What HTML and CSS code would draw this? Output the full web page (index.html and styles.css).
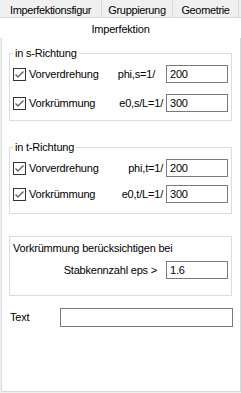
FILE: index.html
```html
<!DOCTYPE html>
<html>
<head>
<meta charset="utf-8">
<link rel="stylesheet" href="styles.css">
</head>
<body>
<div class="tabrow back">
  <div class="tab t1">Imperfektionsfigur</div>
  <div class="tab t2">Gruppierung</div>
  <div class="tab t3">Geometrie</div>
</div>
<div class="tabrow front">
  <div class="tab active">Imperfektion</div>
</div>
<div class="panel">
  <fieldset class="group g1">
    <legend>in s-Richtung</legend>
    <div class="row">
      <label class="check"><svg class="box" width="13" height="13" viewBox="0 0 13 13"><rect x="0.5" y="0.5" width="12" height="12" fill="#fff" stroke="#333"/><polyline points="2.5,6.5 5,9 10.5,3.5" fill="none" stroke="#555" stroke-width="1.2"/></svg>Vorverdrehung</label>
      <span class="param wide">phi,s=1/</span>
      <input class="field" value="200">
    </div>
    <div class="row">
      <label class="check"><svg class="box" width="13" height="13" viewBox="0 0 13 13"><rect x="0.5" y="0.5" width="12" height="12" fill="#fff" stroke="#333"/><polyline points="2.5,6.5 5,9 10.5,3.5" fill="none" stroke="#555" stroke-width="1.2"/></svg>Vorkrümmung</label>
      <span class="param">e0,s/L=1/</span>
      <input class="field" value="300">
    </div>
  </fieldset>

  <fieldset class="group g2">
    <legend>in t-Richtung</legend>
    <div class="row">
      <label class="check"><svg class="box" width="13" height="13" viewBox="0 0 13 13"><rect x="0.5" y="0.5" width="12" height="12" fill="#fff" stroke="#333"/><polyline points="2.5,6.5 5,9 10.5,3.5" fill="none" stroke="#555" stroke-width="1.2"/></svg>Vorverdrehung</label>
      <span class="param">phi,t=1/</span>
      <input class="field" value="200">
    </div>
    <div class="row">
      <label class="check"><svg class="box" width="13" height="13" viewBox="0 0 13 13"><rect x="0.5" y="0.5" width="12" height="12" fill="#fff" stroke="#333"/><polyline points="2.5,6.5 5,9 10.5,3.5" fill="none" stroke="#555" stroke-width="1.2"/></svg>Vorkrümmung</label>
      <span class="param">e0,t/L=1/</span>
      <input class="field" value="300">
    </div>
  </fieldset>

  <div class="group g3">
    <div class="caption">Vorkrümmung berücksichtigen bei</div>
    <div class="row">
      <span class="param push">Stabkennzahl eps &gt;</span>
      <input class="field" value="1.6">
    </div>
  </div>

  <div class="textrow">
    <span class="textlabel">Text</span>
    <input class="field long" value="">
  </div>
</div>
</body>
</html>
```
FILE: styles.css
```css
* { box-sizing: border-box; }
html, body { margin: 0; padding: 0; }
body {
  background: #f0f0f0;
  font-family: "Liberation Sans", Arial, sans-serif;
  font-size: 11px;
  letter-spacing: -0.2px;
  line-height: 13px;
  color: #000;
  height: 392px;
  display: flex;
  flex-direction: column;
  overflow: hidden;
}
.tabrow { display: flex; }
.back { height: 17px; }
.back .tab {
  height: 17px;
  padding-top: 4px;
  text-align: center;
  letter-spacing: -0.35px;
  border-right: 1px solid #d9d9d9;
  background: #f0f0f0;
}
.t1 { width: 102px; }
.t2 { width: 71px; }
.t3 { width: 66px; }
.front {
  border-top: 1px solid #d9d9d9;
  background: #fff;
  height: 21px;
}
.front .tab.active {
  flex: 1;
  text-align: center;
  padding-top: 5px;
}
.panel {
  flex: 1;
  margin-left: 1px;
  background: #fff;
  border-left: 1px solid #d9d9d9;
  border-right: 1px solid #d9d9d9;
  border-bottom: 1px solid #d9d9d9;
  padding: 0 8px 0 7px;
  display: flex;
  flex-direction: column;
}
.group {
  margin: 0;
  border: 1px solid #dcdcdc;
  padding: 0 3px 0 3px;
  min-width: 0;
}
legend {
  padding: 0 2px;
  line-height: 13px;
}
.g1 { margin-top: 9px; padding-top: 5px; padding-bottom: 8px; }
.g2 { margin-top: 20px; padding-top: 5px; padding-bottom: 10px; }
.g1 .row + .row { margin-top: 11px; }
.g2 .row + .row { margin-top: 8px; }
.g3 { margin-top: 22px; padding-top: 5px; padding-bottom: 16px; }
.caption { height: 13px; }
.g3 .row { margin-top: 6px; }
.row {
  display: flex;
  align-items: center;
  height: 18px;
}
.check {
  flex: 1;
  display: flex;
  align-items: center;
}
.box { margin-right: 3px; flex: none; }
.param { margin-right: 3px; white-space: nowrap; }
.param.wide { margin-right: 11px; }
.param.push { margin-left: auto; margin-right: 9px; }
.field {
  width: 62px;
  height: 18px;
  border: 1px solid #7a7a7a;
  padding: 0 0 0 3px;
  margin: 0;
  font-family: "Liberation Sans", Arial, sans-serif;
  font-size: 11px;
  letter-spacing: -0.2px;
  color: #000;
  background: #fff;
  outline: none;
}
.textrow {
  display: flex;
  align-items: center;
  margin-top: 12px;
  margin-right: -1px;
  padding-left: 1px;
}
.textlabel { width: 50px; }
.field.long { flex: 1; width: auto; height: 19px; }
```
